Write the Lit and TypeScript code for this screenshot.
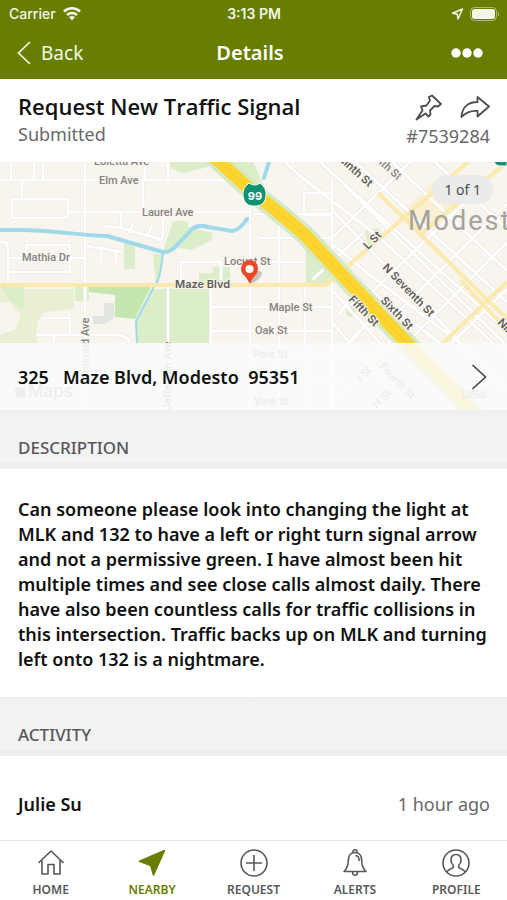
import { LitElement, html, css, svg } from "lit";
import { customElement, property } from "lit/decorators.js";
import { classMap } from "lit/directives/class-map.js";

const icons = {
  home: svg`<path d="M2.5 15 15 3l12.500 12M6 12.500V26h6V16.500h6V26h6V12.500" />`,
  nearby: svg`<path class="solid" d="M27.500 2.500 16.500 27 13.800 17.600 2.500 13.200Z" />`,
  request: svg`<circle cx="15" cy="15" r="13" /><path d="M15 7v16M7 15h16" />`,
  alerts: svg`<path d="M4 23.500c3-3 4.300-5.500 4.300-11 0-5 2.700-8 6.700-8s6.700 3 6.700 8c0 5.500 1.300 8 4.300 11ZM13 4.500V3.700a2 2 0 0 1 4 0v.8M12.600 24v.8a2.400 2.400 0 0 0 4.800 0V24M15.500 7.500c2.500.3 3.700 2.200 3.700 5.500" />`,
  profile: svg`<circle cx="15" cy="15" r="13" /><path d="M6 24c1.300-2.600 3.500-3.400 6.300-4.300v-2.200c-1.800-1.600-2.300-3.700-2.300-5.700C10 8.500 12 6.500 15 6.500s5 2 5 5.300c0 2-.5 4.100-2.300 5.700v2.200c2.800.9 5 1.700 6.300 4.300" />`,
};

type IconName = keyof typeof icons;

@customElement("city-map")
class CityMap extends LitElement {
  static styles = css`
    :host { display: block; overflow: hidden; }
    svg { display: block; width: 100%; height: 100%; font-family: Inter, "Liberation Sans", sans-serif; }
    .land { fill: #f8f5ee; }
    .park { fill: #dcedc9; }
    .wood { fill: #c3e7ae; }
    .field { fill: #e9efd2; }
    .downtown { fill: #fbefd3; }
    .grey { fill: #dfe5df; }
    .clear { fill: #f8f5ee; }
    .casing, .street, .water, .avenue, .verge, .hwy, .hwy-line { fill: none; stroke-linejoin: round; }
    .casing { stroke: #e6e2da; stroke-width: 4; }
    .street { stroke: #fff; stroke-width: 3; }
    .water { stroke: #a0d9ea; stroke-width: 4; stroke-linecap: round; }
    .thin { stroke-width: 2; }
    .avenue { stroke: #fbe9ad; stroke-width: 4; }
    .verge { stroke: #d6e9c5; stroke-width: 20; }
    .hwy { stroke: #fed52f; stroke-width: 13; }
    .hwy-line { stroke: #f6c62e; stroke-width: 1; }
    .label { fill: #85827f; font-family: Roboto, sans-serif; font-size: 11px; font-weight: 500; stroke: #f8f5ee; stroke-width: 2; paint-order: stroke; }
    .strong { fill: #5f5c5a; font-family: Inter, sans-serif; font-weight: 600; }
    .city { fill: #a5a29f; font-family: Roboto, sans-serif; font-size: 27px; letter-spacing: 2px; }
    .shield { fill: #129271; stroke: #fff; stroke-width: 1; }
    .route { fill: #fff; font-size: 11px; font-weight: 700; text-anchor: middle; }
    .shade { fill: #0003; }
    .pin { fill: #ee4927; }
    .dot { fill: #fff; }
    .brand { fill: #8b8b8b; font-size: 17px; font-weight: 500; }
    .legal { fill: #777; font-size: 10px; text-decoration: underline; }
  `;

  render() {
    const streets = `M11 162v18M34 162v18M43 162v18M0 180H232l14 12M85 162V410M22 180v17M14 199H64q4 0 4 4v10q0 5-4 5H14q-2 0-2-3V202q0-3 2-3M68 212H250
      M143 180v32M146 162l-2 18M168 162v18M121 212v16M102 226l19 2 42 12M163 219v15q0 8-6 6M133 224l-4 9M152 224l-4 11
      M0 242h5q3 1 3 6V286M26 259V245H70V272H8M8 258H84M87 246l35 6M101 250v12M116 252v12
      M181 285V262H221V280M250 200V410M253 214h79M260 238h72M279 214V286M305 286V410M332 180V410M304 193H332V215H304ZM253 262H306
      M45 318H70V335M36 335H116q11 0 14 8M54 335v10M168 286V410M211 307H332M211 331H332M279 286V410M253 355H350M253 380H340M211 286V343
      M285 162 300 176 380 238 507 356M320 162 507 331M355 162 507 302M392 162 507 271M435 162 507 229
      M332 173 507 346M332 210 507 391M332 244 370 275 460 343
      M332 238 410 162M312 280 363 233 M372 292 507 162M398 312 507 204M414 336 507 242M450 345 507 289M340 260 365 285M372 292 440 343
      M332 290 380 343M332 322 390 390M338 315 360 287M350 343 390 297M332 360 360 330M340 395 410 320`;
    const water = "M0 230H25C60 231 75 235 107 236L163 252Q170 253 177 245L192 229Q198 224 208 227L232 231Q240 230 247 219";
    const hwy = "M212 155 246 186C262 200 288 219 306 236L345 278 407 343C424 363 447 382 475 415";
    return html`
      <svg viewBox="0 162 507 248" preserveAspectRatio="xMidYMid slice" role="img" aria-label="Map of Modesto">
        <rect class="land" y="162" width="507" height="248" />
        <path class="park" d="M169 162H208V167L184 173 172 169ZM232 162H253L266 190 250 183ZM173 221H188V227L212 233V240L192 250 180 248 163 252ZM124 243H135V269H124ZM153 254H163L158 285H156ZM199 273H213V267H230V285H199ZM306 238 332 250V285H306ZM365 230 379 228 382 238 368 246Z" />
        <path class="field" d="M0 289H74V309L44 312 37 322 37 343H0Z" />
        <path class="clear" d="M0 302 10 302 21 315 16 329 0 335Z" />
        <path class="park" d="M151 289H211V343H137V321ZM75 287H89V301H75ZM0 287H24V310L12 302Z" />
        <path class="wood" d="M89 287H151L135 319 115 317V295L89 292Z" />
        <path class="grey" d="M104 303H114V318L104 324H93V316H104Z" />
        <path class="downtown" d="M402 213 435 181 459 202 421 235Z" />
        <circle class="park" cx="351" cy="312" r="5" />
        <path class="casing" d=${streets} />
        <path class="street" d=${streets} />
        <path class="water" d=${water} />
        <path class="water thin" d="M163 252Q161 276 156 284M157 281 136 321 137 343" />
        <path class="water" d="M269 162 264 178" />
        <path class="avenue" d="M0 285H326L468 162M378 193 507 319M420 235 507 162M443 343 507 282M460 280 507 330" />
        <path class="verge" d=${hwy} />
        <path class="hwy" d=${hwy} />
        <path class="hwy-line" d=${hwy} />
        <text class="label" x="94" y="165">Loletta Ave</text>
        <text class="label" x="99" y="184">Elm Ave</text>
        <text class="label" x="142" y="216">Laurel Ave</text>
        <text class="label" x="22" y="261">Mathia Dr</text>
        <text class="label" x="224" y="265">Locust St</text>
        <text class="label strong" x="175" y="288">Maze Blvd</text>
        <text class="label" x="269" y="311">Maple St</text>
        <text class="label" x="255" y="334">Oak St</text>
        <text class="label" x="253" y="358">Pine St</text>
        <text class="label" x="254" y="405">Vine St</text>
        <text class="label" transform="translate(89 379) rotate(-90)">Emerald Ave</text>
        <text class="label" transform="translate(171 410) rotate(-90)">Jefferson Ave</text>
        <text class="label strong" transform="translate(337 159) rotate(42)">Ninth St</text>
        <text class="label" transform="translate(367 153) rotate(42)">Tenth St</text>
        <text class="label strong" transform="translate(368 250) rotate(-45)">L St</text>
        <text class="label strong" transform="translate(382 268) rotate(46)">N Seventh St</text>
        <text class="label strong" transform="translate(380 301) rotate(46)">Sixth St</text>
        <text class="label strong" transform="translate(348 300) rotate(46)">Fifth St</text>
        <text class="label strong" transform="translate(497 323) rotate(46)">Ninth St</text>
        <text class="label" transform="translate(379 367) rotate(46)">Fourth St</text>
        <text class="label" transform="translate(361 382) rotate(-45)">I St</text>
        <text class="label" transform="translate(377 409) rotate(-45)">H St</text>
        <text class="city" x="408" y="230">Modesto</text>
        <path class="shield" d="M249 183Q255 187 260 183 267 188 266 196 265 205 257 206H252Q244 205 243 196 242 188 249 183Z" />
        <text class="route" x="255" y="200">99</text>
        <path class="shield" d="M493 155H507V166H499Q493 165 493 155Z" />
        <ellipse class="shade" cx="255" cy="277" rx="8" ry="4" transform="rotate(-40 255 277)" />
        <path class="pin" d="M250 284C246 275 241 275 241 268.500A8.500 8.500 0 0 1 258 268.500C258 275 253 276 250 284Z" />
        <circle class="dot" cx="249.500" cy="269" r="4" />
        <path class="brand" d="M20 387q-5-1-5 5 1 6 4 6l2-1 2 1q2 0 3-4-3-2 0-5-2-3-5-1ZM21 386q0-3 3-4 0 3-3 4Z" />
        <text class="brand" x="28" y="397">Maps</text>
        <text class="legal" x="461" y="396">Legal</text>
      </svg>`;
  }
}

@customElement("tab-link")
class TabLink extends LitElement {
  @property() icon: IconName = "home";
  @property() label = "";
  @property({ type: Boolean }) active = false;

  static styles = css`
    :host { display: block; flex: 1; }
    .tab { display: flex; flex-direction: column; align-items: center; gap: 4px; padding-top: 7px;
      color: #58585a; text-decoration: none; font-size: 12px; line-height: 16px; font-weight: 600; }
    .active { color: #677e00; }
    svg { width: 30px; height: 30px; fill: none; stroke: currentColor; stroke-width: 1.6; stroke-linejoin: round; }
    .solid { fill: currentColor; }
  `;

  render() {
    return html`<a class=${classMap({ tab: true, active: this.active })} href="#${this.icon}"
      aria-current=${this.active ? "page" : "false"}>
      <svg viewBox="0 0 30 30" aria-hidden="true">${icons[this.icon]}</svg>
      <span>${this.label}</span>
    </a>`;
  }
}

@customElement("app-root")
class AppRoot extends LitElement {
  static styles = css`
    :host { display: flex; flex-direction: column; min-height: 100vh; background: #fff; color: #111;
      font-family: "Noto Sans", "Open Sans", sans-serif; }
    * { box-sizing: border-box; }
    button { border: 0; padding: 0; background: none; color: inherit; font: inherit; cursor: pointer; }
    h1, h2, h3, p { margin: 0; }
    svg { display: block; fill: none; stroke: currentColor; }
    .top { background: #677e00; color: #fff; }
    .status { display: grid; grid-template-columns: 1fr auto 1fr; align-items: center; height: 27px; padding: 0 8px 0 9px;
      font: 500 14px/20px Inter, sans-serif; color: #f3f6e4; }
    .time { font-weight: 600; }
    .group { display: flex; align-items: center; gap: 6px; }
    .end { justify-content: flex-end; }
    .nav { display: grid; grid-template-columns: 1fr auto 1fr; align-items: center; height: 52px; padding: 0 24px 0 17px; line-height: 28px; }
    .back { display: flex; align-items: center; gap: 10px; color: #f3f6e4; justify-self: start; font-size: 19px; }
    .title { font-size: 20px; font-weight: 600; }
    .more { justify-self: end; }
    .more svg, .solid { fill: currentColor; stroke: none; }
    .head { display: flex; justify-content: space-between; height: 83px; padding: 13px 17px 0 18px; }
    .name { font-family: "Open Sans", sans-serif; font-size: 22px; line-height: 28px; font-weight: 600; }
    .muted { color: #68686a; font-size: 18px; line-height: 28px; }
    .side { display: flex; flex-direction: column; align-items: flex-end; }
    .actions { display: flex; gap: 18px; height: 30px; align-items: center; color: #4d4d4f; }
    .map { position: relative; height: 248px; }
    city-map { height: 100%; }
    .count { position: absolute; top: 13px; right: 14px; padding: 0 12px; border-radius: 15px; background: #e9ebecee;
      color: #4d4d4f; font-size: 14px; line-height: 29px; }
    .address { position: absolute; left: 0; right: 0; bottom: 0; display: flex; align-items: center; justify-content: space-between;
      width: 100%; height: 67px; padding: 0 20px 0 18px; background: #fafbfadd; font-size: 18px; font-weight: 600; text-align: left; white-space: pre; }
    .address svg { color: #444; }
    .band { padding: 24px 18px 7px; background: linear-gradient(#eee, #f3f3f3 8px, #f3f3f3 52px, #eee 53px); color: #58585a;
      font-size: 17px; line-height: 28px; font-weight: 500; }
    .text { padding: 28px 16px 25px 18px; font-size: 18px; line-height: 25px; font-weight: 600; }
    .entry { display: flex; justify-content: space-between; align-items: center; padding: 34px 17px 20px 18px; }
    .who { font-size: 18px; line-height: 28px; font-weight: 600; }
    .tabs { display: flex; height: 60px; margin-top: auto; border-top: 1px solid #e6e6e6; background: #fff; }
  `;

  render() {
    return html`
      <header class="top">
        <div class="status">
          <span class="group">Carrier
            <svg class="wifi" width="20" height="16" viewBox="0 0 20 16" stroke-width="2.500" aria-hidden="true">
              <path d="M2 5.500C6.500 1 13.500 1 18 5.500M5 9C7.800 6.200 12.200 6.200 15 9" /><path class="solid" d="m10 14.500-3-3.200c1.700-1.600 4.300-1.600 6 0Z" />
            </svg>
          </span>
          <span class="time">3:13 PM</span>
          <span class="group end">
            <svg width="13" height="12" viewBox="0 0 13 12" stroke-width="1.500" stroke-linejoin="round" aria-hidden="true"><path d="M11.500 1 7 11 6.200 6 1.500 5.200Z" /></svg>
            <svg width="29" height="14" viewBox="0 0 29 14" aria-hidden="true">
              <rect x=".5" y=".5" width="26" height="13" rx="4" opacity=".5" /><rect class="solid" x="2" y="2" width="23" height="10" rx="2.500" /><path d="M28.500 5v4" opacity=".5" />
            </svg>
          </span>
        </div>
        <nav class="nav">
          <button class="back">
            <svg width="14" height="24" viewBox="0 0 14 24" stroke-width="1.700" aria-hidden="true"><path d="M13 1 1.500 12 13 23" /></svg>
            Back
          </button>
          <h1 class="title">Details</h1>
          <button class="more" aria-label="More">
            <svg width="32" height="10" viewBox="0 0 32 10"><circle cx="5" cy="5" r="4.700" /><circle cx="16" cy="5" r="4.700" /><circle cx="27" cy="5" r="4.700" /></svg>
          </button>
        </nav>
      </header>
      <section class="head">
        <div>
          <h2 class="name">Request New Traffic Signal</h2>
          <p class="muted">Submitted</p>
        </div>
        <div class="side">
          <div class="actions">
            <button aria-label="Pin">
              <svg width="28" height="28" viewBox="0 0 28 28" stroke-width="1.800" stroke-linejoin="round"><path d="M2.500 26.500 8.500 17.500 7 13.500 12.500 12.500 16 7.500 14.800 4 18 2.500 27 11 24 13.500 20.500 13 16 17.500 16.500 21.500 14.500 23.500 11.500 20.500Z" /></svg>
            </button>
            <button aria-label="Share">
              <svg width="30" height="24" viewBox="0 0 30 24" stroke-width="1.800" stroke-linejoin="round"><path d="M17.500 2 29 11.500 17.500 21.500V16C11 15.500 6 17.500 1.500 22 2 13 7.500 7 17.500 7Z" /></svg>
            </button>
          </div>
          <span class="muted">#7539284</span>
        </div>
      </section>
      <section class="map">
        <city-map></city-map>
        <span class="count">1 of 1</span>
        <button class="address"><span>325   Maze Blvd, Modesto  95351</span><svg width="16" height="26" viewBox="0 0 16 26" stroke-width="1.600" aria-hidden="true"><path d="m1.500 1 13 12-13 12" /></svg></button>
      </section>
      <h3 class="band">DESCRIPTION</h3>
      <p class="text">Can someone please look into changing the light at MLK and 132 to have a left or right turn signal arrow and not a permissive green. I have almost been hit multiple times and see close calls almost daily. There have also been countless calls for traffic collisions in this intersection. Traffic backs up on MLK and turning left onto 132 is a nightmare.</p>
      <h3 class="band">ACTIVITY</h3>
      <div class="entry"><span class="who">Julie Su</span><span class="muted">1 hour ago</span></div>
      <nav class="tabs" aria-label="Main">
        <tab-link icon="home" label="HOME"></tab-link>
        <tab-link icon="nearby" label="NEARBY" active></tab-link>
        <tab-link icon="request" label="REQUEST"></tab-link>
        <tab-link icon="alerts" label="ALERTS"></tab-link>
        <tab-link icon="profile" label="PROFILE"></tab-link>
      </nav>`;
  }
}
